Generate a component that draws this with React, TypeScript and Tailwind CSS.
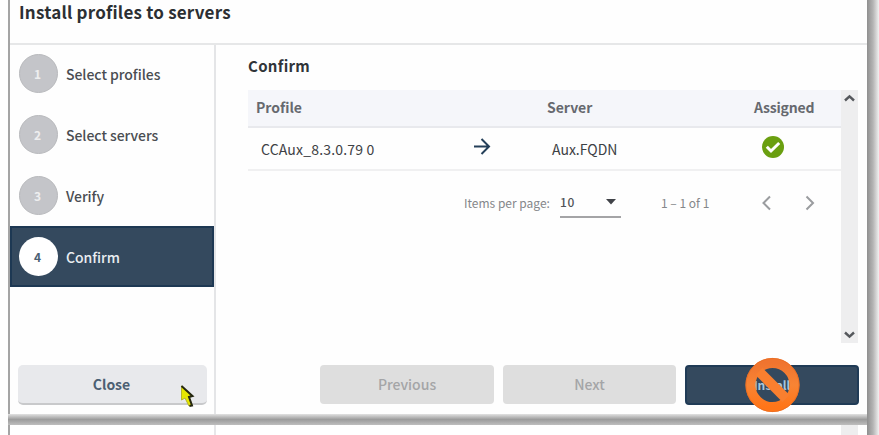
import React from 'react';

const steps = ['Select profiles', 'Select servers', 'Verify', 'Confirm'];

function Step({ label, n, active }: { label: string; n: number; active: boolean }) {
  return (
    <li
      className={
        active
          ? 'flex h-[61px] items-center border-2 border-[#1d3853] bg-[#34495e] pl-[7px] text-[#e9edf1]'
          : 'flex h-[61px] items-center pl-[9px] text-[#4a4d52]'
      }
    >
      <span
        className={
          active
            ? 'flex size-[39px] items-center justify-center rounded-full bg-white text-[12px] font-bold text-[#4b5f73]'
            : 'flex size-[39px] items-center justify-center rounded-full border border-[#b9babd] bg-[#c4c5c9] text-[12px] font-bold text-[#eeeeef]'
        }
      >
        <span className="-translate-x-px">{n}</span>
      </span>
      <span className="ml-2 text-[14px] font-medium leading-5 tracking-[-0.04px]">{label}</span>
    </li>
  );
}

function Scrollbar() {
  return (
    <div className="flex h-[253px] w-[17px] flex-col items-center justify-between bg-[#eeeeef] py-[4px]">
      <svg width="13" height="9" viewBox="0 0 13 9" fill="none" stroke="#55585c" strokeWidth="2.4">
        <path d="M2 6.5 L6.5 2.3 L11 6.5" />
      </svg>
      <svg width="13" height="9" viewBox="0 0 13 9" fill="none" stroke="#55585c" strokeWidth="2.4">
        <path d="M2 2.5 L6.5 6.7 L11 2.5" />
      </svg>
    </div>
  );
}

function Prohibited() {
  return (
    <svg className="absolute left-[55px] top-[-12px]" width="61" height="61" viewBox="0 0 61 61">
      <defs>
        <linearGradient id="orange" x1="0" y1="0" x2="0" y2="1">
          <stop offset="0" stopColor="#f0742f" />
          <stop offset=".5" stopColor="#f88434" />
          <stop offset="1" stopColor="#ff7518" />
        </linearGradient>
      </defs>
      <circle cx="30.5" cy="30" r="22" fill="none" stroke="url(#orange)" strokeWidth="10" />
      <path d="M17 16.5 L44 43.5" stroke="#f97f2f" strokeWidth="10" />
      <circle cx="30.5" cy="30" r="26.6" fill="none" stroke="#e96b20" strokeWidth=".8" />
    </svg>
  );
}

export default function App() {
  return (
    <div className="flex h-[435px] w-[879px] overflow-hidden bg-white font-['Noto_Sans_CJK_SC','Noto_Sans',sans-serif] text-[#34383d]">
      <div className="flex w-[867px] flex-col">
        <div className="ml-2 flex h-[414px] flex-col border-l-2 border-[#a5a5a5] bg-[#fefefe]">
          <h1 className="h-[43px] pl-[9px] text-[17px] font-bold leading-[24px] tracking-[0.21px] text-[#2c2f33]">
            <span className="whitespace-nowrap">Install profiles to servers</span>
          </h1>
          <div className="flex h-[371px] border-t-2 border-[#e6e7e8]">
            <aside className="flex w-[206px] flex-col border-r-2 border-[#e4e5e7]">
              <ul className="-mt-0.5">
                {steps.map((s, i) => (
                  <Step key={s} label={s} n={i + 1} active={i === 3} />
                ))}
              </ul>
              <button className="relative ml-2 mt-[78px] h-[40px] w-[189px] rounded-[5px] border-b-2 border-[#c8c9cb] bg-[#e8e9ec] text-[14px] font-bold text-[#4c5f72]">
                <span className="-translate-x-px inline-block">Close</span>
                <svg className="absolute left-[162px] top-[20px]" width="16" height="24" viewBox="0 0 16 24">
                  <path d="M1.5 1 L1.5 15 L5 13 L9 21 L12 20 L9 12 L13 11 Z" fill="#e6e600" stroke="#b5b62a" />
                  <path d="M1.5 1 L12.5 11 L9 12 L12 20.5 L9.5 21" fill="none" stroke="#252711" strokeWidth="2" />
                </svg>
              </button>
            </aside>
            <main className="flex w-[651px] flex-col pl-8">
              <h2 className="mt-[9px] h-[36px] text-[15px] font-bold leading-6 tracking-[0.3px] text-[#303439]">Confirm</h2>
              <div className="flex">
                <div className="w-[593px]">
                  <div className="flex h-[38px] items-center border-b-2 border-[#e8e9ed] bg-[#f5f6fa] pb-px text-[14px] font-bold text-[#66696f]">
                    <span className="w-[299px] pl-2">Profile</span>
                    <span className="w-[207px]">Server</span>
                    <span className="tracking-[-0.2px]">Assigned</span>
                  </div>
                  <div className="flex h-[43px] items-center border-b-2 border-[#f0f0f1] text-[14px] text-[#3d4145]">
                    <span className="w-[225px] pl-[13px] pt-px tracking-[0.18px]">CCAux_8.3.0.79 0</span>
                    <svg width="18" height="18" viewBox="0 0 18 18" className="-mt-1" fill="none" stroke="#243f59" strokeWidth="2">
                      <path d="M1 8.5 H16 M8.5 1 L16 8.5 L8.5 16" />
                    </svg>
                    <span className="ml-[61px] w-[210px] pt-px">Aux.FQDN</span>
                    <svg width="22" height="22" viewBox="0 0 22 22" className="-mt-1">
                      <circle cx="11" cy="11" r="11" fill="#6a9f10" />
                      <path d="M4.8 10.8 L9 15 L17.2 7" fill="none" stroke="white" strokeWidth="3" />
                    </svg>
                  </div>
                  <div className="flex h-[64px] items-center pb-px text-[12px] text-[#85878a]">
                    <span className="w-[312px] pl-[216px]">
                      <span className="whitespace-nowrap">Items per page:</span>
                    </span>
                    <span className="mt-[5px] flex h-[26px] w-[61px] justify-between border-b-2 border-[#a4a4a6] pr-[5px] pt-px font-medium tracking-[0.6px] text-[#505358]">
                      10
                      <svg width="10" height="6" viewBox="0 0 10 6" className="mt-[6px]">
                        <path d="M0 0 H10 L5 5.5 Z" fill="#404348" />
                      </svg>
                    </span>
                    <span className="ml-[40px] w-[101px]">1 – 1 of 1</span>
                    <svg width="54" height="16" viewBox="0 0 54 16" fill="none" stroke="#9a9c9f" strokeWidth="2">
                      <path d="M8 1.5 L1.5 8 L8 14.5 M44.5 1.5 L51 8 L44.5 14.5" />
                    </svg>
                  </div>
                </div>
                <Scrollbar />
              </div>
              <div className="ml-[72px] mt-[22px] flex gap-[9px] text-[14px] font-medium text-[#a4a5a7]">
                <button className="h-[39px] w-[174px] rounded-[4px] bg-[#dedede]">Previous</button>
                <button className="h-[39px] w-[173px] rounded-[4px] bg-[#dedede]">Next</button>
                <button className="relative h-[40px] w-[174px] rounded-[4px] border-2 border-[#203b56] bg-[#34495e] text-[12px] font-bold text-[#a9c6dc]">
                  Install
                  <Prohibited />
                </button>
              </div>
            </main>
          </div>
        </div>
        <div className="ml-2 h-[11px] shrink-0 bg-linear-to-b from-[#e2e2e2] via-[#9c9c9c] to-[#bebebe]" />
        <div className="ml-2 flex flex-1 border-l-2 border-[#a5a5a5]">
          <div className="w-[206px] border-r-2 border-[#e7e7e9]" />
          <div className="ml-[625px] w-[17px] bg-[#eeeeef]" />
        </div>
      </div>
      <div className="w-3 bg-linear-to-r from-[#8f8f8f] via-[#b4b4b4] to-[#f2f2f2]" />
    </div>
  );
}
